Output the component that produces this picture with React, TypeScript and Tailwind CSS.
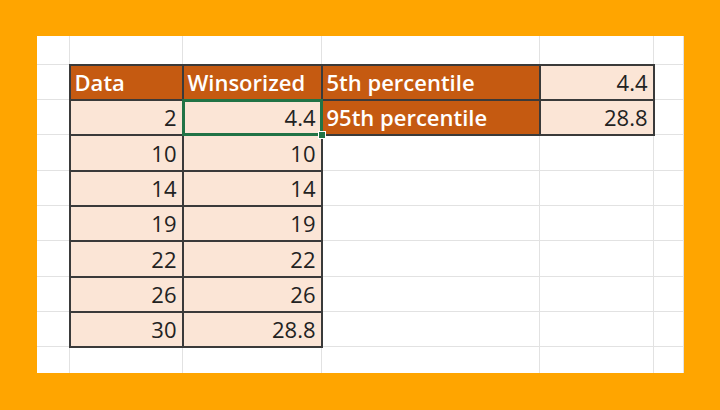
const cols = ["w-[33px]", "w-[113px]", "w-[139px]", "w-[218px]", "w-[114px]", "w-[30px]"];

const data: [string, string][] = [
  ["2", "4.4"],
  ["10", "10"],
  ["14", "14"],
  ["19", "19"],
  ["22", "22"],
  ["26", "26"],
  ["30", "28.8"],
];

const grid = "border border-[#e2e2e2] p-0";
const dark = "border-2 border-[#3a3a3a] p-0";
const head = `${dark} bg-[#c55a11] text-white font-semibold text-left pl-[4px] align-middle`;
const num = `${dark} bg-[#fbe5d6] text-[#222222] text-right pr-[5px] align-middle`;

export default function App() {
  return (
    <div className="w-[720px] h-[410px] bg-[#ffa500] pl-[37px] pt-[36px]">
      <div className="w-[647px] h-[337px] bg-white overflow-hidden">
        <table
          className="border-collapse table-fixed text-[22px] leading-none -mt-px -ml-px"
          style={{ fontFamily: '"Open Sans", "Liberation Sans", sans-serif' }}
        >
          <colgroup>
            {cols.map((c, i) => (
              <col key={i} className={c} />
            ))}
          </colgroup>
          <tbody>
            <tr className="h-[29px]">
              {cols.map((_, i) => (
                <td key={i} className={grid} />
              ))}
            </tr>
            <tr className="h-[35px]">
              <td className={grid} />
              <td className={head}>Data</td>
              <td className={head}>Winsorized</td>
              <td className={head}>5th percentile</td>
              <td className={num}>4.4</td>
              <td className={grid} />
            </tr>
            {data.map(([a, b], i) => (
              <tr key={i} className={i % 3 === 1 ? "h-[36px]" : "h-[35px]"}>
                <td className={grid} />
                <td className={num}>{a}</td>
                <td className={`${num} relative`}>
                  {b}
                  {i === 0 && (
                    <>
                      <span className="absolute z-10 -left-[2px] -top-[2px] -right-[2px] -bottom-[2px] border-[3px] border-[#217346]" />
                      <span className="absolute z-20 -right-[5px] -bottom-[5px] w-[8px] h-[8px] bg-[#217346] border border-white" />
                    </>
                  )}
                </td>
                {i === 0 ? (
                  <>
                    <td className={head}>95th percentile</td>
                    <td className={num}>28.8</td>
                  </>
                ) : (
                  <>
                    <td className={grid} />
                    <td className={grid} />
                  </>
                )}
                <td className={grid} />
              </tr>
            ))}
            <tr className="h-[30px]">
              {cols.map((_, i) => (
                <td key={i} className={grid} />
              ))}
            </tr>
          </tbody>
        </table>
      </div>
    </div>
  );
}
